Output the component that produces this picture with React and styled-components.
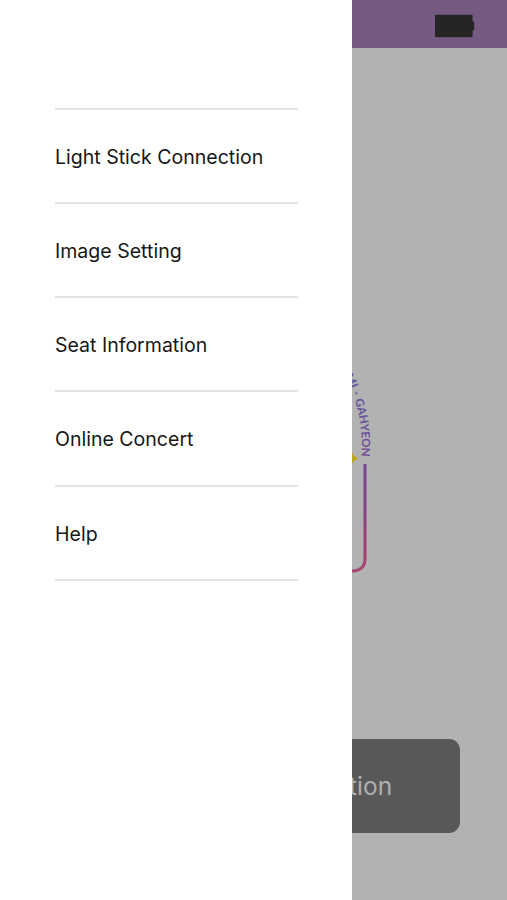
import React from "react";
import styled, { createGlobalStyle } from "styled-components";

const menu = [
  "Light Stick Connection",
  "Image Setting",
  "Seat Information",
  "Online Concert",
  "Help",
];

const App = () => {
  return (
    <Screen>
      <GlobalStyle />
      <Drawer>
        <Menu>
          {menu.map((item) => (
            <MenuItem key={item}>{item}</MenuItem>
          ))}
        </Menu>
      </Drawer>
      <Page>
        <StatusBar>
          <Battery viewBox="0 0 40 24">
            <rect x="0" y="0.7" width="37.6" height="22.6" rx="1" />
            <rect x="37" y="7.5" width="2.2" height="9" rx="1" />
          </Battery>
        </StatusBar>
        <Content>
          <Emblem viewBox="0 0 155 220">
            <defs>
              <linearGradient
                id="frame"
                gradientUnits="userSpaceOnUse"
                x1="0"
                y1="100"
                x2="0"
                y2="212"
              >
                <stop offset="0" stopColor="#73478f" />
                <stop offset="0.35" stopColor="#7d4587" />
                <stop offset="0.75" stopColor="#9d3f72" />
                <stop offset="1" stopColor="#a84570" />
              </linearGradient>
              <linearGradient
                id="names"
                gradientUnits="userSpaceOnUse"
                x1="0"
                y1="15"
                x2="0"
                y2="98"
              >
                <stop offset="0" stopColor="#5d5b9c" />
                <stop offset="1" stopColor="#785397" />
              </linearGradient>
              <path id="arc" d="M-28.5 -15 A150 150 0 0 1 9.3 96.5" />
            </defs>
            <Names fill="url(#names)">
              <textPath href="#arc" startOffset="100%" textAnchor="end">
                MI - GAHYEON
              </textPath>
            </Names>
            <path
              d="M0 92 L1.8 96 L6.5 98.5 L1.8 101 L0 104.5 Z"
              fill="#bda416"
            />
            <path
              d="M13 104 V199 Q13 210.5 0 211"
              fill="none"
              stroke="url(#frame)"
              strokeWidth="3"
            />
          </Emblem>
          <ConnectButton>tion</ConnectButton>
        </Content>
      </Page>
    </Screen>
  );
};

const GlobalStyle = createGlobalStyle`
  body {
    margin: 0;
    font-family: Inter, "Liberation Sans", sans-serif;
  }
`;

const Screen = styled.div`
  display: flex;
  width: 507px;
  height: 900px;
  overflow: hidden;
`;

const Drawer = styled.nav`
  box-sizing: border-box;
  width: 352px;
  padding: 107.8px 54px 0 55px;
  background-color: #fff;
`;

const Menu = styled.ul`
  margin: 0;
  padding: 0;
  list-style: none;
  border-top: 2px solid #e2e3e3;
`;

const MenuItem = styled.li`
  box-sizing: border-box;
  height: 94.2px;
  padding-top: 2px;
  display: flex;
  align-items: center;
  border-bottom: 2px solid #e2e3e3;
  color: #171717;
  font-size: 19.55px;
  white-space: nowrap;
`;

const Page = styled.main`
  width: 155px;
  display: flex;
  flex-direction: column;
  overflow: hidden;
  background-color: #b2b2b2;
`;

const StatusBar = styled.header`
  box-sizing: border-box;
  height: 48px;
  padding: 14px 32px 0 0;
  display: flex;
  justify-content: flex-end;
  align-items: flex-start;
  background-color: #755b81;
`;

const Battery = styled.svg`
  width: 40px;
  height: 24px;
  fill: #252525;
`;

const Content = styled.div`
  padding-top: 312px;
  display: flex;
  flex-direction: column;
  align-items: flex-start;
`;

const Emblem = styled.svg`
  width: 155px;
  height: 220px;
`;

const Names = styled.text`
  font-family: Lato, sans-serif;
  font-size: 11.5px;
  font-weight: 900;
  word-spacing: 0.8px;
`;

const ConnectButton = styled.button`
  width: 108px;
  height: 94px;
  margin-top: 158.5px;
  padding: 0;
  border: none;
  border-radius: 0 11px 11px 0;
  background-color: #585858;
  color: #b0b0b0;
  font-family: inherit;
  font-size: 24.5px;
  text-align: left;
  text-indent: -3px;
`;

export default App;
